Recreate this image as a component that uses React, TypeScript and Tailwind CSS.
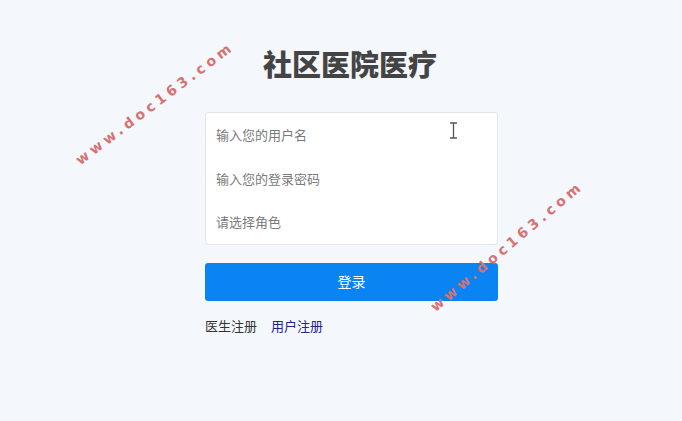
import React from "react";

const font = { fontFamily: '"Noto Sans CJK SC", "Noto Sans", sans-serif' };

function Watermark({ cls }: { cls: string }) {
  return (
    <div
      className={`pointer-events-none absolute text-[14px] font-bold tracking-[4px] text-[#d77272] whitespace-nowrap ${cls}`}
      style={{ fontFamily: '"DejaVu Sans", sans-serif' }}
    >
      www.doc163.com
    </div>
  );
}

export default function App() {
  return (
    <div className="relative h-[421px] w-full overflow-hidden bg-[#f4f8fc]" style={font}>
      <div className="ml-[205px] w-[293px] pt-[45px]">
        <h1 className="text-center text-[29px] font-black leading-[36px] text-[#444] pr-[3px]">
          社区医院医疗
        </h1>
        <div className="mt-[31px] rounded-[3px] border border-[#e3e6ea] bg-white">
          {["输入您的用户名", "输入您的登录密码", "请选择角色"].map((t) => (
            <div key={t} className="flex h-[43.5px] items-center px-[10px] text-[13px] text-[#7a7a7a]">
              {t}
            </div>
          ))}
        </div>
        <button className="mt-[18px] flex h-[38px] w-full items-center justify-center rounded-[3px] bg-[#0a84f2] text-[14px] text-white">
          登录
        </button>
        <div className="mt-[16px] flex gap-[14px] text-[13px] leading-[18px]">
          <span className="text-[#333]">医生注册</span>
          <span className="text-[#23238a]">用户注册</span>
        </div>
      </div>
      <svg className="absolute left-[449px] top-[122px]" width="9" height="17" viewBox="0 0 9 17">
        <path d="M1 1h7M4.5 1v15M1 16h7" stroke="#555" strokeWidth="1.3" fill="none" />
      </svg>
      <Watermark cls="left-[58px] top-[93px] -rotate-[37deg]" />
      <Watermark cls="left-[410px] top-[236px] -rotate-[40deg]" />
    </div>
  );
}
